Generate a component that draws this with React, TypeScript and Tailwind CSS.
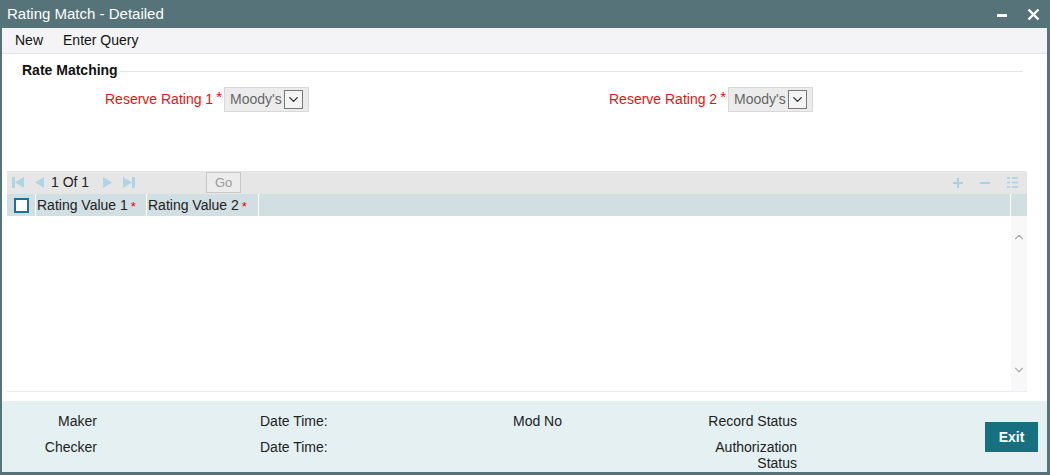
import { ChevronDown, ChevronUp } from "lucide-react";

function Required() {
  return <span className="text-[#e00] ml-[3px] text-[15px] leading-none relative top-[-3px]">*</span>;
}

function SmallRequired() {
  return <span className="text-[#e00] ml-[3px] text-[13px] leading-none relative top-[1px]">*</span>;
}

function SelectBox() {
  return (
    <div className="flex items-center h-[25px] w-[85px] bg-[#ececec] border border-[#d8d8d8] pl-[5px] pr-[3px]">
      <span className="text-[14px] text-[#666]">Moody's</span>
      <span className="ml-[2px] flex items-center justify-center w-[19px] h-[19px] border border-[#777] bg-[#f4f4f4]">
        <ChevronDown className="w-[15px] h-[15px] text-[#333]" strokeWidth={2.2} />
      </span>
    </div>
  );
}

function NavIcon({ dir, bar }: { dir: "l" | "r"; bar?: boolean }) {
  return (
    <svg width="12" height="13" viewBox="0 0 12 13" className="fill-[#aed4e6]">
      {dir === "l" ? (
        <>
          {bar && <rect x="0" y="1" width="3" height="11" />}
          <polygon points={bar ? "12,1 12,12 3,6.5" : "11,1 11,12 2,6.5"} />
        </>
      ) : (
        <>
          <polygon points={bar ? "0,1 0,12 9,6.5" : "1,1 1,12 10,6.5"} />
          {bar && <rect x="9" y="1" width="3" height="11" />}
        </>
      )}
    </svg>
  );
}

export default function App() {
  return (
    <div
      className="w-[1050px] h-[475px] bg-[#56737a] flex flex-col overflow-hidden"
      style={{ fontFamily: '"Liberation Sans", Arial, sans-serif' }}
    >
      {/* title bar */}
      <div className="h-[28px] flex items-center justify-between pl-[7px] pr-[10px] shrink-0">
        <span className="text-white text-[15px]">Rating Match - Detailed</span>
        <div className="flex items-center gap-[20px]">
          <span className="block w-[10px] h-[3px] bg-white mt-[2px]" />
          <svg width="13" height="13" viewBox="0 0 13 13" className="stroke-white" strokeWidth="2.4">
            <line x1="1.5" y1="1.5" x2="11.5" y2="11.5" />
            <line x1="11.5" y1="1.5" x2="1.5" y2="11.5" />
          </svg>
        </div>
      </div>

      <div className="flex-1 flex flex-col mx-[2px] mr-[3px] mb-[3px] bg-white">
        {/* menu */}
        <div className="h-[26px] bg-[#f4f4f6] border-b border-[#e4e4e8] flex items-center pl-[13px] gap-[20px] text-[14px] text-[#111] shrink-0">
          <span>New</span>
          <span>Enter Query</span>
        </div>

        {/* rate matching */}
        <div className="pl-[20px] pr-[24px] pt-[6px] flex items-center">
          <span className="text-[14px] font-bold text-[#111] pr-[2px]">Rate Matching</span>
          <div className="flex-1 h-px bg-[#e6e6e6] mt-[2px]" />
        </div>
        <div className="flex mt-[6px] h-[25px]">
          <div className="w-[504px] flex items-center">
            <div className="w-[222px] flex items-center justify-end text-[14px] text-[#e3140f] pr-[2px]">
              Reserve Rating 1<Required />
            </div>
            <SelectBox />
          </div>
          <div className="flex items-center">
            <div className="w-[222px] flex items-center justify-end text-[14px] text-[#e3140f] pr-[2px]">
              Reserve Rating 2<Required />
            </div>
            <SelectBox />
          </div>
        </div>

        {/* grid */}
        <div className="mt-[59px] ml-[5px] mr-[20px] flex flex-col">
          <div className="h-[23px] bg-[#e6e6e6] flex items-center pl-[5px] pr-[8px]">
            <div className="flex items-center gap-[9px]">
              <NavIcon dir="l" bar />
              <NavIcon dir="l" />
            </div>
            <span className="text-[14px] text-[#222] ml-[6px]">1 Of 1</span>
            <div className="flex items-center gap-[9px] ml-[13px]">
              <NavIcon dir="r" />
              <NavIcon dir="r" bar />
            </div>
            <div className="ml-[71px] h-[21px] w-[35px] border border-[#c8c8c8] bg-[#ececec] flex items-center justify-center text-[13px] text-[#999]">
              Go
            </div>
            <div className="ml-auto flex items-center gap-[15px] text-[#a5d2e6]">
              <svg width="12" height="12" viewBox="0 0 12 12" className="stroke-current" strokeWidth="2">
                <line x1="6" y1="1" x2="6" y2="11" />
                <line x1="1" y1="6" x2="11" y2="6" />
              </svg>
              <svg width="12" height="12" viewBox="0 0 12 12" className="stroke-current" strokeWidth="2">
                <line x1="1" y1="6" x2="11" y2="6" />
              </svg>
              <svg width="13" height="13" viewBox="0 0 13 13" className="stroke-current" strokeWidth="1.6">
                <line x1="1" y1="2" x2="4" y2="2" />
                <line x1="6" y1="2" x2="12" y2="2" />
                <line x1="1" y1="6.5" x2="4" y2="6.5" />
                <line x1="6" y1="6.5" x2="12" y2="6.5" />
                <line x1="1" y1="11" x2="4" y2="11" />
                <line x1="6" y1="11" x2="12" y2="11" />
              </svg>
            </div>
          </div>
          <div className="flex h-[22px]">
            <div className="flex-1 bg-[#d1dfe3] flex items-stretch text-[14px] text-[#222]">
              <div className="w-[29px] flex items-center justify-center border-r border-white">
                <span className="block w-[15px] h-[15px] border-2 border-[#1f6f9e] bg-white" />
              </div>
              <div className="w-[111px] flex items-center pl-[1px] border-r border-white">
                Rating Value 1<SmallRequired />
              </div>
              <div className="w-[112px] flex items-center pl-[1px] border-r border-white">
                Rating Value 2<SmallRequired />
              </div>
            </div>
            <div className="w-[16px] bg-[#d1dfe3] ml-px" />
          </div>
          <div className="h-[176px] flex border-b border-[#ebebf3]">
            <div className="flex-1" />
            <div className="w-[16px] bg-[#f8f8f8] flex flex-col items-center justify-between py-[14px]">
              <ChevronUp className="w-[14px] h-[14px] text-[#aaa]" strokeWidth={2} />
              <ChevronDown className="w-[14px] h-[14px] text-[#aaa]" strokeWidth={2} />
            </div>
          </div>
        </div>

        {/* footer */}
        <div className="mt-auto h-[71px] bg-[#e4f0f2] flex text-[14px] leading-[16px] text-[#222] pt-[12px]">
          <div className="w-[95px] flex flex-col items-end gap-[10px]">
            <span>Maker</span>
            <span>Checker</span>
          </div>
          <div className="ml-[163px] w-[70px] flex flex-col gap-[10px]">
            <span>Date Time:</span>
            <span>Date Time:</span>
          </div>
          <div className="ml-[183px] w-[60px]">
            <span>Mod No</span>
          </div>
          <div className="ml-[129px] w-[95px] flex flex-col items-end text-right">
            <span>Record Status</span>
            <span className="mt-[10px]">Authorization</span>
            <span>Status</span>
          </div>
          <div className="ml-[188px] mt-[9px]">
            <div className="w-[53px] h-[30px] bg-[#17707f] text-white font-bold text-[14px] flex items-center justify-center">
              Exit
            </div>
          </div>
        </div>
      </div>
    </div>
  );
}
